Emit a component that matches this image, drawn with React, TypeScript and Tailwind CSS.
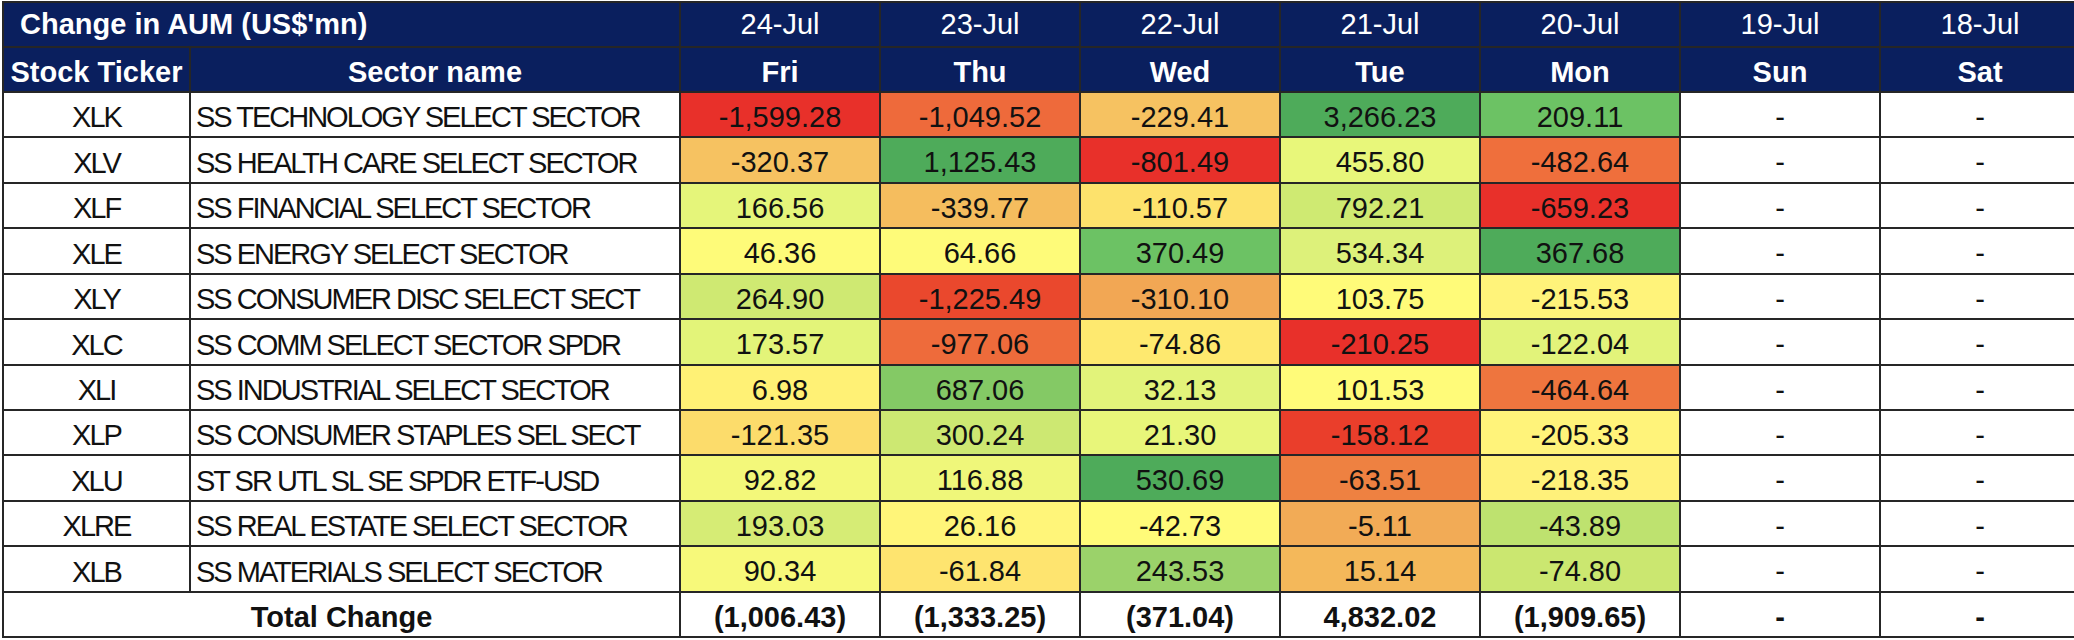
import React from "react";

type Cell = [string, string];
type Row = { t: string; name: string; cells: Cell[] };

const rows: Row[] = [
  { t: "XLK", name: "SS TECHNOLOGY SELECT SECTOR", cells: [["-1,599.28", "#e8302a"], ["-1,049.52", "#ee6a3b"], ["-229.41", "#f6c261"], ["3,266.23", "#4eab5a"], ["209.11", "#6cc264"]] },
  { t: "XLV", name: "SS HEALTH CARE SELECT SECTOR", cells: [["-320.37", "#f6c261"], ["1,125.43", "#4eab5a"], ["-801.49", "#e8302a"], ["455.80", "#e8f77a"], ["-482.64", "#ef6f3c"]] },
  { t: "XLF", name: "SS FINANCIAL SELECT SECTOR", cells: [["166.56", "#e5f57a"], ["-339.77", "#f5bd5e"], ["-110.57", "#fde26c"], ["792.21", "#cfea72"], ["-659.23", "#e8302a"]] },
  { t: "XLE", name: "SS ENERGY SELECT SECTOR", cells: [["46.36", "#fefb79"], ["64.66", "#fefb79"], ["370.49", "#6cc264"], ["534.34", "#ddf17a"], ["367.68", "#4eab5a"]] },
  { t: "XLY", name: "SS CONSUMER DISC SELECT SECT", cells: [["264.90", "#cfe972"], ["-1,225.49", "#ea482d"], ["-310.10", "#f2a754"], ["103.75", "#fffb79"], ["-215.53", "#fff37a"]] },
  { t: "XLC", name: "SS COMM SELECT SECTOR SPDR", cells: [["173.57", "#e3f479"], ["-977.06", "#ee6b3b"], ["-74.86", "#fee96f"], ["-210.25", "#e8302a"], ["-122.04", "#e2f37a"]] },
  { t: "XLI", name: "SS INDUSTRIAL SELECT SECTOR", cells: [["6.98", "#fff175"], ["687.06", "#84c965"], ["32.13", "#e2f37a"], ["101.53", "#fffb79"], ["-464.64", "#ee753e"]] },
  { t: "XLP", name: "SS CONSUMER STAPLES SEL SECT", cells: [["-121.35", "#fcdc6b"], ["300.24", "#cde872"], ["21.30", "#e8f67a"], ["-158.12", "#ea3e2b"], ["-205.33", "#fff37a"]] },
  { t: "XLU", name: "ST SR UTL SL SE SPDR ETF-USD", cells: [["92.82", "#f3f87a"], ["116.88", "#eff77a"], ["530.69", "#4eab5a"], ["-63.51", "#ee8141"], ["-218.35", "#fff17a"]] },
  { t: "XLRE", name: "SS REAL ESTATE SELECT SECTOR", cells: [["193.03", "#d6ec75"], ["26.16", "#fff579"], ["-42.73", "#fffb79"], ["-5.11", "#f2ab56"], ["-43.89", "#bee26f"]] },
  { t: "XLB", name: "SS MATERIALS SELECT SECTOR", cells: [["90.34", "#f7f97a"], ["-61.84", "#fee46f"], ["243.53", "#9bd26a"], ["15.14", "#f4b85a"], ["-74.80", "#cbe770"]] },
];

const dates = ["24-Jul", "23-Jul", "22-Jul", "21-Jul", "20-Jul", "19-Jul", "18-Jul"];
const days = ["Fri", "Thu", "Wed", "Tue", "Mon", "Sun", "Sat"];
const totals = ["(1,006.43)", "(1,333.25)", "(371.04)", "4,832.02", "(1,909.65)", "-", "-"];

const font = { fontFamily: '"Liberation Sans", Arial, sans-serif' };

export default function App() {
  return (
    <div className="w-[2074px] h-[640px] overflow-hidden bg-white pt-[1px] pl-[2px]" style={font}>
      <div className="grid w-[2081px] gap-[2px] p-[2px] bg-[#262626] grid-cols-[185px_488px_198px_198px_198px_198px_198px_198px_198px] grid-rows-[43px_43px_43px_44px_43px_44px_43px_44px_43px_43px_44px_43px_44px_43px] text-[29px] leading-none text-[#111]">
        {/* header row 1 */}
        <div className="col-span-2 bg-[#0a1f5e] text-white font-bold flex items-center pl-[16px]">Change in AUM (US$'mn)</div>
        {dates.map((d) => (
          <div key={d} className="bg-[#0a1f5e] text-white flex items-center justify-center">{d}</div>
        ))}
        {/* header row 2 */}
        <div className="bg-[#0a1f5e] text-white font-bold flex items-center justify-center pt-[5px]">Stock Ticker</div>
        <div className="bg-[#0a1f5e] text-white font-bold flex items-center justify-center pt-[5px]">Sector name</div>
        {days.map((d) => (
          <div key={d} className="bg-[#0a1f5e] text-white font-bold flex items-center justify-center pt-[5px]">{d}</div>
        ))}
        {/* data rows */}
        {rows.map((r) => (
          <React.Fragment key={r.t}>
            <div className="bg-white flex items-center justify-center pt-[6px] tracking-[-2px]">{r.t}</div>
            <div className="bg-white flex items-center pl-[5px] pt-[6px] tracking-[-2px] whitespace-nowrap">{r.name}</div>
            {r.cells.map(([v, c], i) => (
              <div key={i} className="flex items-center justify-center pt-[5px]" style={{ backgroundColor: c }}>{v}</div>
            ))}
            <div className="bg-white flex items-center justify-center pt-[5px]">-</div>
            <div className="bg-white flex items-center justify-center pt-[5px]">-</div>
          </React.Fragment>
        ))}
        {/* total row */}
        <div className="col-span-2 bg-white font-bold flex items-center justify-center pt-[5px]">Total Change</div>
        {totals.map((v, i) => (
          <div key={i} className="bg-white font-bold flex items-center justify-center pt-[5px]">{v}</div>
        ))}
      </div>
    </div>
  );
}
